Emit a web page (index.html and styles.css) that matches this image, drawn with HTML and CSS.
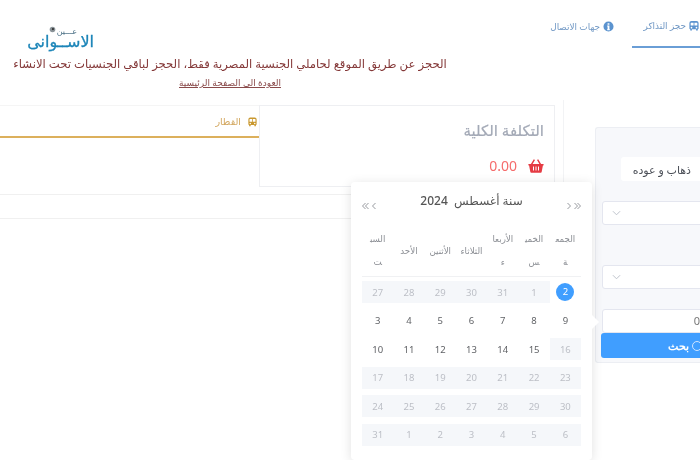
FILE: index.html
```html
<!DOCTYPE html>
<html lang="ar" dir="rtl">
<head>
<meta charset="utf-8">
<title>حجز التذاكر</title>
<link rel="stylesheet" href="styles.css">
</head>
<body>
<div class="page">
  <header class="topbar">
    <nav class="tabs">
      <a class="tab active"><svg class="tab-icon" viewBox="0 0 12 12"><path d="M3 0h6a2.500 2.500 0 0 1 2.500 2.500V9a1 1 0 0 1-1 1v1.500H8.500V10h-5v1.500H1.500V10a1 1 0 0 1-1-1V2.500A2.500 2.500 0 0 1 3 0zM2 2.500V5.500h3.500V2H2.500a.5.5 0 0 0-.5.5zM6.500 2v3.500H10V2.500a.5.5 0 0 0-.5-.5zM3 7a1 1 0 1 0 0 2 1 1 0 0 0 0-2zm6 0a1 1 0 1 0 0 2 1 1 0 0 0 0-2z" fill-rule="evenodd"/></svg>حجز التذاكر</a>
      <a class="tab"><svg class="info-icon" viewBox="0 0 12 12"><path d="M6 .5a5.500 5.500 0 1 1 0 11 5.500 5.500 0 0 1 0-11zM5 2.500v1.500h2V2.500zM4.500 5v1H5v3h-.5v1h3V9H7V5z" fill-rule="evenodd"/></svg>جهات الاتصال</a>
    </nav>
    <div class="brand">
      <div class="logo">
        <div class="logo-top"><span class="logo-small">عـــين</span><svg class="eye" viewBox="0 0 8 8"><circle cx="4" cy="4" r="3.200"/><circle class="pupil" cx="4.500" cy="3.500" r="1.300"/></svg></div>
        <div class="logo-main">الاســوانى</div>
      </div>
    </div>
  </header>
  <div class="notice">
    <p class="notice-text">الحجز عن طريق الموقع لحاملي الجنسية المصرية فقط، الحجز لباقي الجنسيات تحت الانشاء</p>
    <a class="home-link">العودة الى الصفحة الرئيسية</a>
  </div>
  <main class="content">
    <aside class="search">
      <div class="search-card">
        <div class="trip-row"><span class="trip">ذهاب و عوده</span></div>
        <div class="field select"><svg class="chev" viewBox="0 0 10 6"><path d="M1 1l4 4 4-4"/></svg></div>
        <div class="field select second"><svg class="chev" viewBox="0 0 10 6"><path d="M1 1l4 4 4-4"/></svg></div>
        <div class="field date"><span>0</span></div>
        <button class="search-btn"><i class="ring"></i><span>بحث</span></button>
      </div>
    </aside>
    <section class="results">
      <div class="results-top">
        <div class="cost">
          <h2 class="cost-title">التكلفة الكلية</h2>
          <div class="cost-value"><svg class="basket" viewBox="0 0 16 14"><path d="M5.800 .3L2.900 5H.8a.8.8 0 0 0 0 1.500h.3l1.200 6.300a1 1 0 0 0 1 .9h9.400a1 1 0 0 0 1-.9l1.200-6.300h.3a.8.8 0 0 0 0-1.500h-2.100L10.200.3 9 1l2.400 4H4.600L7 1zM5 7.500h1v4H5zM7.500 7.500h1v4h-1zM10 7.500h1v4h-1z" fill-rule="evenodd"/></svg><span>0.00</span></div>
        </div>
        <div class="train-tab">
          <div class="train-head"><svg class="train-icon" viewBox="0 0 12 12"><path d="M3 0h6a2.500 2.500 0 0 1 2.500 2.500V9a1 1 0 0 1-1 1v1.500H8.500V10h-5v1.500H1.500V10a1 1 0 0 1-1-1V2.500A2.500 2.500 0 0 1 3 0zM2 2.500V5.500h3.500V2H2.500a.5.5 0 0 0-.5.5zM6.500 2v3.500H10V2.500a.5.5 0 0 0-.5-.5zM3 7a1 1 0 1 0 0 2 1 1 0 0 0 0-2zm6 0a1 1 0 1 0 0 2 1 1 0 0 0 0-2z" fill-rule="evenodd"/></svg><span>القطار</span></div>
        </div>
      </div>
      <div class="strip"></div>
    </section>
  </main>
  <div class="picker">
    <i class="arrow"></i>
    <div class="picker-head">
      <span class="nav"><svg class="nav-icon" viewBox="0 0 15 8"><path d="M1.500 1l3 3-3 3M8.500 1l3 3-3 3M11.500 1l3 3-3 3"/></svg></span>
      <span class="picker-title">سنة أغسطس&nbsp; 2024</span>
      <span class="nav"><svg class="nav-icon" viewBox="0 0 15 8"><path d="M3.500 1l-3 3 3 3M6.500 1l-3 3 3 3M13.500 1l-3 3 3 3"/></svg></span>
    </div>
    <div class="week">
      <span>الجمعة</span><span>الخميس</span><span>الأربعاء</span><span>الثلاثاء</span><span>الأثنين</span><span>الأحد</span><span>السبت</span>
    </div>
    <div class="days">
      <span class="day plain"><b class="sel">2</b></span><span class="day off">1</span><span class="day off">31</span><span class="day off">30</span><span class="day off">29</span><span class="day off">28</span><span class="day off">27</span>
      <span class="day">9</span><span class="day">8</span><span class="day">7</span><span class="day">6</span><span class="day">5</span><span class="day">4</span><span class="day">3</span>
      <span class="day off">16</span><span class="day">15</span><span class="day">14</span><span class="day">13</span><span class="day">12</span><span class="day">11</span><span class="day">10</span>
      <span class="day off">23</span><span class="day off">22</span><span class="day off">21</span><span class="day off">20</span><span class="day off">19</span><span class="day off">18</span><span class="day off">17</span>
      <span class="day off">30</span><span class="day off">29</span><span class="day off">28</span><span class="day off">27</span><span class="day off">26</span><span class="day off">25</span><span class="day off">24</span>
      <span class="day off">6</span><span class="day off">5</span><span class="day off">4</span><span class="day off">3</span><span class="day off">2</span><span class="day off">1</span><span class="day off">31</span>
    </div>
  </div>
</div>
</body>
</html>
```
FILE: styles.css
```css
* { box-sizing: border-box; }
html, body { margin: 0; padding: 0; height: 100%; overflow: hidden; background: #fff; }
body { font-family: "Noto Sans", "DejaVu Sans", sans-serif; color: #606266; }
.page { position: relative; width: 700px; height: 460px; overflow: hidden; will-change: transform; }

.topbar { display: flex; justify-content: space-between; height: 48px; }
.tabs { display: flex; gap: 18px; }
.tab { display: flex; align-items: center; gap: 3px; height: 48px; padding-top: 5px; font-size: 8.900px; color: #6f97c4; white-space: nowrap; }
.tab.active { width: 68px; border-bottom: 2px solid #6a9ed6; }
.tab-icon { width: 10px; height: 10px; fill: #5b93cf; flex: none; margin-right: 1px; }
.info-icon { width: 11px; height: 11px; fill: #5b93cf; flex: none; }
.brand { padding: 27px 0 0 26px; }
.logo { width: 68px; color: #1c85b8; }
.logo-top { display: flex; align-items: flex-start; gap: 1px; height: 8px; padding-right: 17px; }
.logo-small { font-size: 8px; line-height: 8px; color: #4a6f85; white-space: nowrap; }
.eye { width: 7px; height: 7px; margin-top: -1px; fill: #8b9499; flex: none; }
.pupil { fill: #333; }
.logo-main { font-size: 16px; line-height: 12px; white-space: nowrap; -webkit-text-stroke: .3px #1c85b8; }

.notice { text-align: center; height: 52px; width: 434px; margin-right: 253px; padding-top: 6px; }
.notice-text { margin: 0; font-size: 11.650px; line-height: 20px; color: #843838; white-space: nowrap; }
.home-link { display: block; margin-top: 3px; font-size: 9px; line-height: 12px; color: #8a4a4a; text-decoration: underline; }

.content { display: flex; align-items: flex-start; }
.search { width: 136px; flex: none; padding: 27px 0 0 31px; }
.search-card { width: 125px; height: 236px; margin-right: -20px; background: #f7f8fb; border: 1px solid #eceef3; border-right: 0; border-radius: 3px 0 0 3px; padding: 29px 0 0 6px; }
.trip-row { padding-left: 19px; }
.trip { display: block; height: 24px; background: #fff; border-radius: 3px; font-size: 11px; line-height: 25px; color: #4b4f57; padding-right: 29px; white-space: nowrap; }
.field { background: #fff; border: 1px solid #e4e6ef; border-radius: 3px; height: 24px; }
.select { margin-top: 20px; display: flex; align-items: center; justify-content: flex-end; padding-left: 9px; }
.second { margin-top: 40px; }
.date { margin-top: 20px; font-size: 11px; line-height: 22px; color: #777; padding-right: 19px; }
.chev { width: 9px; height: 6px; fill: none; stroke: #b8bcc6; stroke-width: 1; }
.search-btn { display: flex; align-items: center; gap: 3px; width: 119px; height: 25px; padding: 0 18px 0 0; border: 0; background: #409eff; color: #fff; font: 700 10.500px "Noto Sans", sans-serif; border-radius: 3px 0 0 3px; }
.ring { flex: none; width: 10px; height: 10px; border: 1px solid #cfe5ff; border-radius: 50%; }

.results { flex: 1; border-right: 1px solid #f2f3f5; height: 312px; }
.results-top { display: flex; align-items: flex-start; padding-top: 5px; }
.cost { width: 296px; height: 82px; flex: none; margin-right: 8px; border: 1px solid #eeeff2; padding: 12px 10px 0; }
.cost-title { margin: 0; font-size: 15px; line-height: 24px; font-weight: 500; color: #a3a9b6; -webkit-text-stroke: .2px #a3a9b6; }
.cost-value { display: flex; align-items: center; gap: 11px; margin-top: 14px; font-size: 14px; color: #f56c6c; }
.basket { width: 16px; height: 14px; fill: #e53b43; flex: none; }
.train-tab { flex: 1; height: 33px; border-bottom: 2px solid #dcb05c; border-top: 1px solid #f5f5f5; }
.train-head { display: flex; align-items: center; gap: 7px; padding: 9px 2px 0; font-size: 9.500px; color: #d3a861; }
.train-icon { width: 9px; height: 10px; fill: #c9982f; flex: none; }
.strip { height: 25px; margin-top: 7px; border-top: 1px solid #f0f0f0; border-bottom: 1px solid #f0f0f0; }

.picker { position: absolute; left: 351px; top: 182px; width: 241px; height: 278px; background: #fff; border-radius: 4px; box-shadow: 0 2px 12px rgba(0,0,0,.12); padding: 0 11px; }
.arrow { position: absolute; right: -5px; top: 135px; width: 10px; height: 10px; background: #fff; transform: rotate(45deg); }
.picker-head { display: flex; align-items: center; justify-content: space-between; height: 44px; }
.picker-title { font-size: 12px; font-weight: 500; color: #555; position: relative; top: -4px; }
.nav { display: flex; padding-top: 4px; }
.nav-icon { width: 15px; height: 8px; fill: none; stroke: #8a8d93; stroke-width: .9; }
.week { display: grid; grid-template-columns: repeat(7, 1fr); align-items: center; height: 51px; border-bottom: 1px solid #f0f1f3; }
.week span { padding: 0 4px; text-align: center; font-size: 8.700px; line-height: 23px; color: #8b8e94; word-break: break-all; }
.days { display: grid; grid-template-columns: repeat(7, 1fr); grid-auto-rows: 22px; row-gap: 6.500px; padding-top: 4px; }
.day { display: flex; align-items: center; justify-content: center; font-size: 9.500px; color: #606266; }
.off { background: #f5f7fa; color: #bcbfc6; }
.plain { background: none; }
.sel { display: block; width: 18px; height: 18px; line-height: 18px; text-align: center; font-weight: 400; border-radius: 50%; background: #409eff; color: #fff; }
```
